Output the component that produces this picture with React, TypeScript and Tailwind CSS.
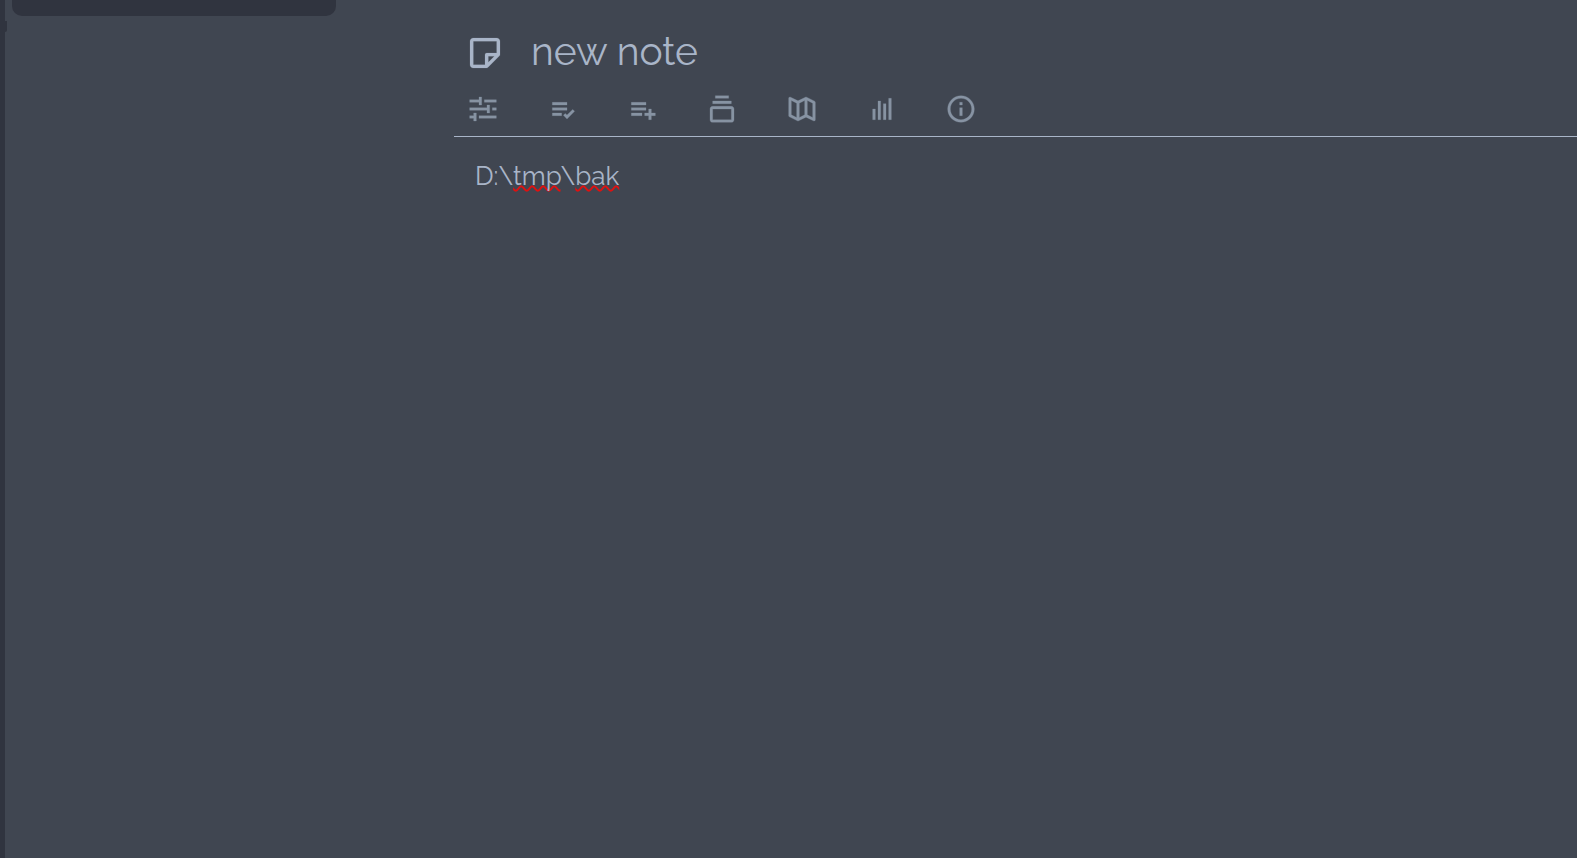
import type { IconType } from 'react-icons';
import {
    BiBarChart,
    BiCollection,
    BiInfoCircle,
    BiListCheck,
    BiListPlus,
    BiMapAlt,
    BiNote,
    BiSlider,
} from 'react-icons/bi';

const RIBBON_TABS: { label: string; Icon: IconType }[] = [
    { label: 'Basic properties', Icon: BiSlider },
    { label: 'Owned attributes', Icon: BiListCheck },
    { label: 'Inherited attributes', Icon: BiListPlus },
    { label: 'Note paths', Icon: BiCollection },
    { label: 'Note map', Icon: BiMapAlt },
    { label: 'Similar notes', Icon: BiBarChart },
    { label: 'Note info', Icon: BiInfoCircle },
];

const SPELLING =
    'underline decoration-[#e01010] decoration-wavy decoration-[0.06em] underline-offset-0 [text-decoration-skip-ink:none]';

const LauncherEdge = () => (
    <div className="relative w-[5px] shrink-0 bg-[#30343f]">
        <span className="absolute left-full top-[21px] h-[11px] w-0.5 rounded-br-sm bg-[#30343f]" />
    </div>
);

const NoteTree = () => (
    <aside className="w-[449px] shrink-0 pl-[7px]">
        <div className="h-4 w-[324px] rounded-b-[10px] bg-[#30343f]" />
    </aside>
);

const NoteTitle = () => (
    <div className="flex h-20 items-center gap-5 pl-[11px] pt-[26px]">
        <button type="button" aria-label="Change note icon" className="text-[#a9b5c8]">
            <BiNote size={40} strokeWidth={0.1} />
        </button>
        <input
            aria-label="Note title"
            defaultValue="new note"
            spellCheck={false}
            className="min-w-0 flex-1 bg-transparent pb-1 pl-1.5 text-[39px] leading-12 text-[#a9b5c8] outline-none"
        />
    </div>
);

const Ribbon = () => (
    <div className="flex h-[57px] items-center border-b border-[#a9b5c8] pl-[13px] pt-0.5">
        <div className="grid w-[558px] grid-cols-7">
            {RIBBON_TABS.map(({ label, Icon }) => (
                <button key={label} type="button" aria-label={label} className="text-[#8793a3]">
                    <Icon size={32} strokeWidth={0.2} />
                </button>
            ))}
        </div>
    </div>
);

const NoteEditor = () => (
    <div
        role="textbox"
        aria-label="Note content"
        aria-multiline="true"
        contentEditable
        suppressContentEditableWarning
        spellCheck={false}
        className="flex-1 px-[21px] pt-[19px] text-[26px] leading-10 text-[#a9b5c8] outline-none"
    >
        <p>
            D:\<span className={SPELLING}>tmp</span>\<span className={SPELLING}>bak</span>
        </p>
    </div>
);

const App = () => {
    return (
        <div className="flex min-h-screen bg-[#404651] font-[Raleway,Lato,sans-serif]">
            <LauncherEdge />
            <NoteTree />
            <main className="flex min-w-0 flex-1 flex-col">
                <NoteTitle />
                <Ribbon />
                <NoteEditor />
            </main>
        </div>
    );
};

export default App;
